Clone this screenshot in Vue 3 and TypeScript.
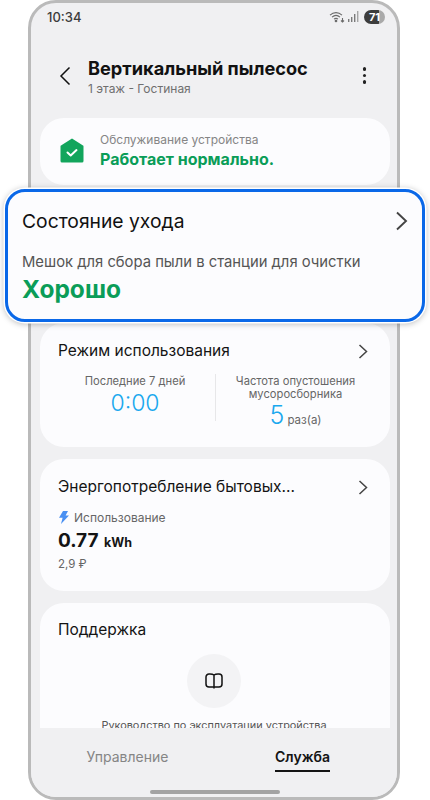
<template>
  <div class="stage">
    <div class="phone">
      <div class="status-bar">
        <span class="time">10:34</span>
        <div class="status-icons">
          <svg width="16" height="12" viewBox="0 0 16 12" fill="none" stroke="#6a6a6a" stroke-width="1.100">
            <path d="M1 4.200C4.600 .8 9.400 .8 13 4.200" />
            <path d="M3 6.200C5.600 3.800 8.400 3.800 11 6.200" />
            <path d="M5 8.200C6.400 7 7.600 7 9 8.200" />
            <circle cx="7" cy="10" r=".8" fill="#6a6a6a" />
            <path d="M13.500 7v4M12 9.500l1.500 1.500 1.500-1.500" />
          </svg>
          <svg width="11" height="12" viewBox="0 0 11 12" fill="#7a7a7a">
            <rect x="0" y="8" width="1.400" height="3" />
            <rect x="3" y="6" width="1.400" height="5" />
            <rect x="6" y="3" width="1.400" height="8" />
            <rect x="9" y="0" width="1.400" height="11" fill="#a5a5a5" />
          </svg>
          <div class="battery"><span>71</span></div>
        </div>
      </div>

      <header class="top-bar">
        <svg class="back" width="12" height="20" viewBox="0 0 12 20" fill="none" stroke="#111" stroke-width="1.500">
          <path d="M10.500 1.500 2 10l8.500 8.500" />
        </svg>
        <div class="top-titles">
          <h1>Вертикальный пылесос</h1>
          <p>1 этаж - Гостиная</p>
        </div>
        <div class="more"><i></i><i></i><i></i></div>
      </header>

      <main class="content">
        <section class="card maintenance">
          <svg width="24" height="25" viewBox="0 0 24 25">
            <path d="M12 .5 23 7.500a1 1 0 0 1 .5.9V23a1.500 1.500 0 0 1-1.500 1.500H2A1.500 1.500 0 0 1 .5 23V8.400a1 1 0 0 1 .5-.9Z" fill="#12a55c" />
            <path d="m7.500 14.500 3.200 3 5.800-5.400" fill="none" stroke="#fff" stroke-width="2" stroke-linecap="round" stroke-linejoin="round" />
          </svg>
          <div>
            <p class="maint-label">Обслуживание устройства</p>
            <p class="maint-value">Работает нормально.</p>
          </div>
        </section>

        <div class="card care-slot"></div>

        <section class="card usage">
          <div class="card-head">
            <h2>Режим использования</h2>
            <svg class="chev" width="10" height="15" viewBox="0 0 10 15" fill="none" stroke="#444" stroke-width="1.500">
              <path d="m1.500 1 7 6.500-7 6.500" />
            </svg>
          </div>
          <div class="usage-grid">
            <div class="usage-col">
              <p>Последние 7 дней</p>
              <b class="big-blue">0:00</b>
            </div>
            <div class="usage-col">
              <p>Частота опустошения мусоросборника</p>
              <div class="count"><b class="big-blue">5</b> <span class="unit">раз(а)</span></div>
            </div>
          </div>
        </section>

        <section class="card energy">
          <div class="card-head">
            <h2>Энергопотребление бытовых...</h2>
            <svg class="chev" width="10" height="15" viewBox="0 0 10 15" fill="none" stroke="#444" stroke-width="1.500">
              <path d="m1.500 1 7 6.500-7 6.500" />
            </svg>
          </div>
          <div class="energy-label">
            <svg width="11" height="13" viewBox="0 0 11 13"><path d="M5 0h5L7.600 4.600H11L3 13l1.600-6.200H1Z" fill="#4a90f2" /></svg>
            <span>Использование</span>
          </div>
          <p class="energy-value">0.77 <span>kWh</span></p>
          <p class="energy-cost">2,9 ₽</p>
        </section>

        <section class="card support">
          <h2>Поддержка</h2>
          <div class="manual-icon">
            <svg width="18" height="17" viewBox="0 0 18 17" fill="none" stroke="#111" stroke-width="1.500" stroke-linejoin="round">
              <path d="M9 2C8 1.300 6.500 1 5 1H4A3 3 0 0 0 1 4v7a3 3 0 0 0 3 3h10a3 3 0 0 0 3-3V4a3 3 0 0 0-3-3h-1C11.500 1 10 1.300 9 2ZM9 2v13.500" />
            </svg>
          </div>
          <p class="manual-text">Руководство по эксплуатации устройства</p>
        </section>
      </main>

      <nav class="tabs">
        <span class="tab">Управление</span>
        <span class="tab active">Служба</span>
      </nav>
      <div class="home-bar"></div>
    </div>

    <section class="care-popup">
      <div class="popup-head">
        <h2>Состояние ухода</h2>
        <svg width="13" height="20" viewBox="0 0 13 20" fill="none" stroke="#444" stroke-width="1.900">
          <path d="m2 1.500 9 8.500-9 8.500" />
        </svg>
      </div>
      <p class="popup-label">Мешок для сбора пыли в станции для очистки</p>
      <p class="popup-value">Хорошо</p>
    </section>
  </div>
</template>

<script setup lang="ts">
</script>

<style>
html,
body {
  margin: 0;
  background: #fff;
}
</style>

<style scoped>
* {
  box-sizing: border-box;
}

p,
h1,
h2 {
  margin: 0;
  font-weight: 400;
}

.stage {
  position: relative;
  width: 430px;
  height: 800px;
  overflow: hidden;
  padding: 0 30px 0 28px;
  font-family: Inter, Roboto, sans-serif;
  color: #111;
}

.phone {
  position: relative;
  display: flex;
  flex-direction: column;
  height: 800px;
  overflow: hidden;
  border: 3px solid #bababa;
  border-radius: 28px;
  background: #f0f0f2;
}

.status-bar {
  display: flex;
  justify-content: space-between;
  align-items: center;
  height: 30px;
  flex-shrink: 0;
  padding: 0 12px 3px 16px;
}

.time {
  font-size: 13px;
  font-weight: 500;
  color: #3c3c3c;
}

.status-icons {
  display: flex;
  align-items: center;
  gap: 3px;
}

.battery {
  width: 21px;
  height: 14px;
  margin-left: 2px;
  border-radius: 7px;
  background: linear-gradient(90deg, #3d3d3d 71%, #a9a9a9 71%);
  color: #fff;
  font-size: 11px;
  font-weight: 700;
  line-height: 14px;
  text-align: center;
}

.top-bar {
  display: flex;
  align-items: center;
  height: 85px;
  flex-shrink: 0;
  padding: 0 31px 0 28px;
}

.back {
  flex-shrink: 0;
}

.top-titles {
  flex: 1;
  margin-left: 17px;
}

.top-titles h1 {
  font-size: 18.200px;
  font-weight: 700;
  line-height: 24px;
}

.top-titles p {
  margin-top: 1px;
  font-size: 12px;
  color: #6f6f6f;
}

.more {
  display: flex;
  flex-direction: column;
  gap: 3px;
}

.more i {
  width: 3.500px;
  height: 3.500px;
  border-radius: 50%;
  background: #222;
}

.content {
  flex: 1;
  min-height: 0;
  overflow: hidden;
  display: flex;
  flex-direction: column;
  gap: 12px;
  padding: 0 7px 0 9px;
}

.card {
  flex-shrink: 0;
  border-radius: 24px;
  background: #fcfcfe;
  padding: 0 18px;
}

.maintenance {
  display: flex;
  align-items: center;
  gap: 16px;
  height: 67px;
  padding-left: 20px;
}

.maintenance > svg {
  margin-top: -3px;
}

.maint-label {
  margin-top: -2px;
  font-size: 12px;
  color: #858585;
}

.maint-value {
  margin-top: 2px;
  font-size: 16px;
  font-weight: 700;
  color: #0a9d58;
}

.care-slot {
  height: 114px;
}

.usage {
  height: 124px;
}

.card-head {
  display: flex;
  justify-content: space-between;
  align-items: center;
  padding-top: 17px;
  padding-right: 4px;
}

.usage .card-head {
  padding-top: 18px;
}

.card h2 {
  font-size: 15.500px;
  line-height: 20px;
  color: #141414;
}

.usage-grid {
  display: grid;
  grid-template-columns: 158px 1fr;
  margin-top: 13px;
}

.usage-col {
  text-align: center;
  font-size: 11.200px;
  color: #666;
}

.usage-col:first-child {
  height: 47px;
  border-right: 1px solid #e7e7e9;
  padding-right: 3px;
}

.usage-col:last-child {
  padding: 0 8px 0 11px;
}

.usage-col p {
  padding-top: 1px;
  line-height: 13px;
}

.big-blue {
  display: inline-block;
  font-size: 23px;
  font-weight: 300;
  line-height: 30px;
  color: #1aa8ee;
}

.usage-col:last-child .big-blue {
  font-size: 25px;
}

.count {
  margin-top: -1px;
}

.unit {
  font-size: 11.500px;
}

.energy {
  height: 132px;
}

.energy .card-head {
  padding-top: 18px;
}

.energy-label {
  display: flex;
  align-items: center;
  gap: 5px;
  margin-top: 13px;
  font-size: 12px;
  color: #666;
}

.energy-value {
  margin-top: 4px;
  font-size: 19px;
  font-weight: 700;
  line-height: 24px;
  color: #141414;
}

.energy-value span {
  margin-left: 1px;
  font-size: 12.500px;
}

.energy-cost {
  margin-top: 2px;
  font-size: 11.500px;
  color: #666;
}

.support {
  height: 180px;
  padding: 17px 20px 0 18px;
}

.manual-icon {
  display: flex;
  align-items: center;
  justify-content: center;
  width: 54px;
  height: 54px;
  margin: 14px auto 0;
  border-radius: 50%;
  background: #f3f3f5;
}

.manual-text {
  margin-top: 10px;
  font-size: 10.900px;
  line-height: 14px;
  color: #555;
  text-align: center;
  white-space: nowrap;
}

.tabs {
  display: grid;
  grid-template-columns: 1fr 1fr;
  height: 69px;
  flex-shrink: 0;
  padding: 20px 7px 0 9px;
  background: #f0f0f2;
  text-align: center;
  font-size: 14px;
  color: #858585;
}

.tab {
  justify-self: center;
  height: 24px;
}

.tab.active {
  font-weight: 600;
  color: #141414;
  border-bottom: 2px solid #141414;
}

.home-bar {
  position: absolute;
  left: 119px;
  bottom: 3px;
  width: 130px;
  height: 4px;
  border-radius: 2px;
  background: #a3a3a3;
}

.care-popup {
  position: absolute;
  left: 5px;
  top: 189px;
  width: 420px;
  height: 133px;
  padding: 17px 14px 0;
  border: 3px solid #0a68e8;
  border-radius: 20px;
  background: #fcfcfe;
  box-shadow: 0 0 0 1.500px #fff, 0 1px 6px 1px rgba(0, 0, 0, .28);
}

.popup-head {
  display: flex;
  justify-content: space-between;
  align-items: center;
}

.popup-head h2 {
  font-size: 19.300px;
  line-height: 24px;
}

.popup-label {
  margin-top: 20px;
  font-size: 14.800px;
  color: #555;
}

.popup-value {
  margin-top: 3px;
  font-size: 24.500px;
  font-weight: 700;
  color: #0a9d58;
}
</style>
